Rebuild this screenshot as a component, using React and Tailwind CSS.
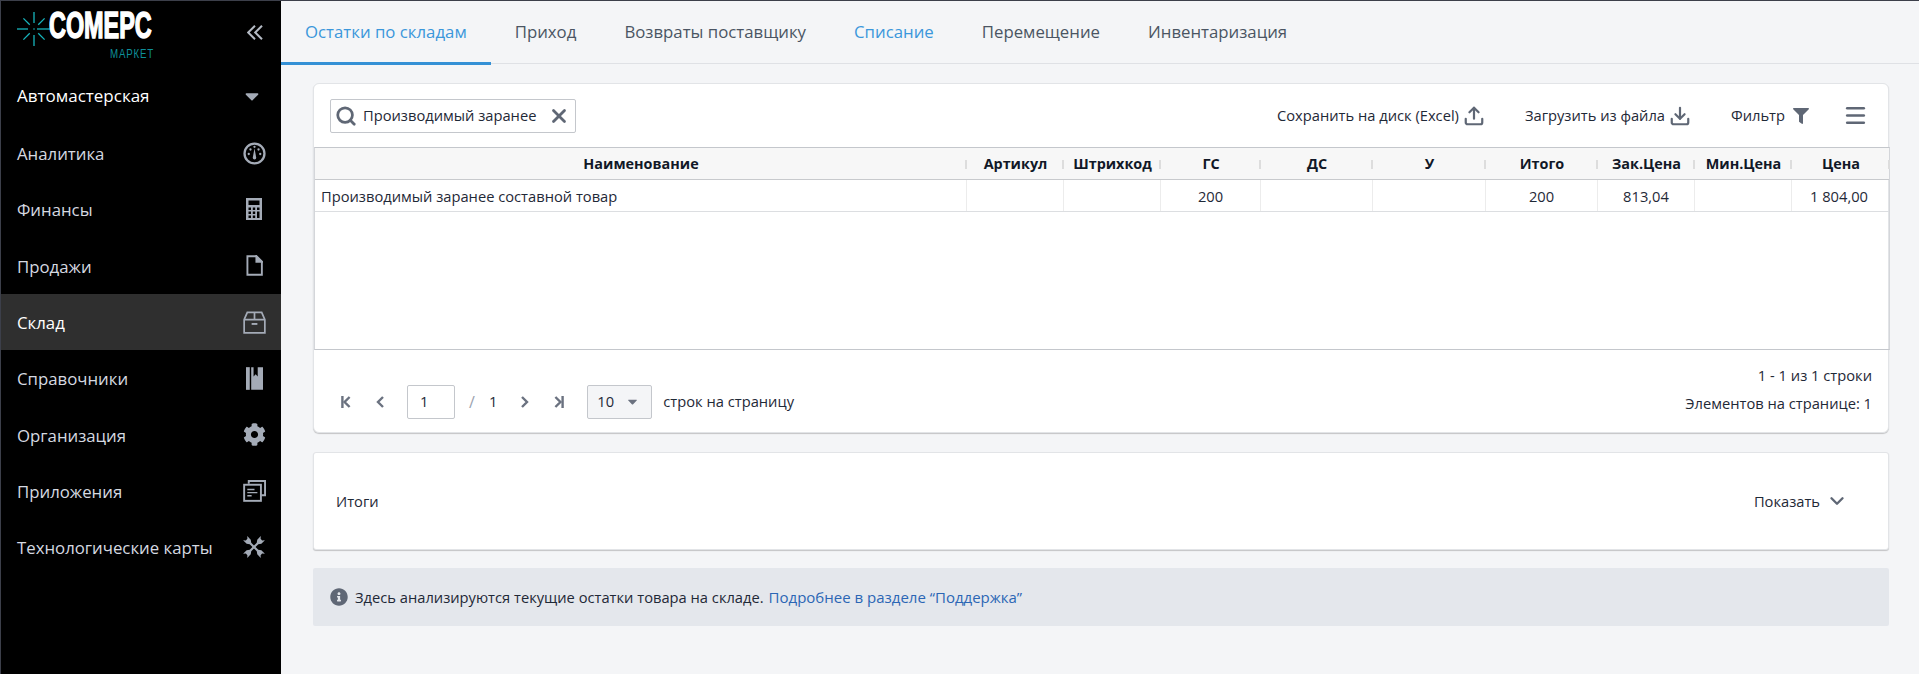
import React from "react";
import { Upload, Download, Menu, ChevronDown, Search, X } from "lucide-react";
import { FaCog, FaFilter, FaInfoCircle, FaCaretDown } from "react-icons/fa";

function GaugeIcon() {
  return (
    <svg viewBox="0 0 24 24" className="w-[23px] h-[23px]" fill="none" stroke="currentColor">
      <circle cx="12" cy="12" r="10.4" strokeWidth="2.4" />
      <path d="M12 6.5 L13.8 16.5 A1.8 1.8 0 0 1 10.2 16.5 Z" fill="currentColor" stroke="none" />
      <circle cx="6" cy="12.5" r="1.2" fill="currentColor" stroke="none" />
      <circle cx="7.8" cy="7.8" r="1.2" fill="currentColor" stroke="none" />
      <circle cx="12" cy="5" r="1.2" fill="currentColor" stroke="none" />
      <circle cx="16.2" cy="7.8" r="1.2" fill="currentColor" stroke="none" />
      <circle cx="18" cy="12.5" r="1.2" fill="currentColor" stroke="none" />
    </svg>
  );
}

function CalcIcon() {
  return (
    <svg viewBox="0 0 16 22" className="w-[16px] h-[22px]" fill="currentColor">
      <path
        fillRule="evenodd"
        d="M0 0 H16 V22 H0 Z M2.5 2.5 V7 H13.5 V2.5 Z M2.5 9.5 V12 H5 V9.5 Z M6.8 9.5 V12 H9.2 V9.5 Z M11 9.5 V12 H13.5 V9.5 Z M2.5 13.5 V16 H5 V13.5 Z M6.8 13.5 V16 H9.2 V13.5 Z M11 13.5 V20 H13.5 V13.5 Z M2.5 17.5 V20 H5 V17.5 Z M6.8 17.5 V20 H9.2 V17.5 Z"
      />
    </svg>
  );
}

function FileIcon() {
  return (
    <svg viewBox="0 0 18 22" className="w-[17px] h-[21px]" fill="none" stroke="currentColor" strokeWidth="2">
      <path d="M1.5 1.2 H11 L16.8 7 V20.8 H1.5 Z" />
      <path d="M11 1.2 V7 H16.8 Z" fill="currentColor" />
    </svg>
  );
}

function BoxIcon() {
  return (
    <svg viewBox="0 0 24 24" className="w-[23px] h-[23px]" fill="none" stroke="currentColor" strokeWidth="1.8">
      <path d="M1.2 9 L4.5 1.5 H19.5 L22.8 9 V22.8 H1.2 Z" />
      <path d="M1.2 9 H22.8 M12 1.5 V9" />
      <path d="M9 13.5 H15" strokeWidth="2" />
    </svg>
  );
}

function BooksIcon() {
  return (
    <svg viewBox="0 0 18 24" className="w-[17px] h-[23px]" fill="currentColor">
      <rect x="0" y="0" width="4" height="24" />
      <path d="M5.5 0 H8 V10 L10.2 7.5 L12.4 10 V0 H18 V24 H5.5 Z" />
    </svg>
  );
}

function WindowsIcon() {
  return (
    <svg viewBox="0 0 24 24" className="w-[23px] h-[23px]" fill="none" stroke="currentColor" strokeWidth="2">
      <path d="M6 5 V2 H23 V17 H19" />
      <rect x="1.2" y="6" width="17.5" height="16.8" />
      <path d="M4.5 11 H12 M4.5 14.2 H15 M4.5 17.4 H9" strokeWidth="1.5" />
    </svg>
  );
}

function WrenchesIcon() {
  const wrench = "M8.5 -3 V3 L10.7 6 V18 L8.5 21 V27 L10.7 24.5 H13.3 L15.5 27 V21 L13.3 18 V6 L15.5 3 V-3 L13.3 -0.5 H10.7 Z";
  return (
    <svg viewBox="0 0 24 24" className="w-[20px] h-[20px] overflow-visible" fill="currentColor">
      <path d={wrench} transform="rotate(45 12 12)" />
      <path d={wrench} transform="rotate(-45 12 12)" />
    </svg>
  );
}

function SunburstIcon() {
  const rays = [0, 45, 135, 180, 225, 270, 315];
  return (
    <svg viewBox="0 0 34 34" className="w-[34px] h-[34px] shrink-0" stroke="#17b5bd" strokeWidth="1.3">
      {rays.map((r) => (
        <line key={r} x1="17" y1={r % 90 === 0 ? 0 : 2} x2="17" y2="11" transform={`rotate(${r} 17 17)`} />
      ))}
      <line x1="20" y1="17" x2="34" y2="17" />
      <circle cx="17" cy="17" r="0.8" fill="#17b5bd" stroke="none" />
    </svg>
  );
}

function FirstIcon({ flip }) {
  return (
    <svg viewBox="0 0 10 12" className={`w-[10px] h-[12px] ${flip ? "-scale-x-100" : ""}`} fill="none" stroke="#6b7280" strokeWidth="2.4">
      <path d="M1.4 0 V12" />
      <path d="M8.6 1 L3.6 6 L8.6 11" />
    </svg>
  );
}

const menu = [
  { title: "Аналитика", icon: <GaugeIcon /> },
  { title: "Финансы", icon: <CalcIcon /> },
  { title: "Продажи", icon: <FileIcon /> },
  { title: "Склад", icon: <BoxIcon />, active: true },
  { title: "Справочники", icon: <BooksIcon /> },
  { title: "Организация", icon: <FaCog size={23} /> },
  { title: "Приложения", icon: <WindowsIcon /> },
  { title: "Технологические карты", icon: <WrenchesIcon /> },
];

const tabs = [
  { title: "Остатки по складам", active: true },
  { title: "Приход" },
  { title: "Возвраты поставщику" },
  { title: "Списание", blue: true },
  { title: "Перемещение" },
  { title: "Инвентаризация" },
];

const columns = ["Наименование", "Артикул", "Штрихкод", "ГС", "ДС", "У", "Итого", "Зак.Цена", "Мин.Цена", "Цена"];
const row = ["Производимый заранее составной товар", "", "", "200", "", "", "200", "813,04", "", "1 804,00"];
const gridCols = "grid grid-cols-[652px_97px_97px_100px_112px_113px_112px_97px_97px_98px]";

function Sidebar() {
  return (
    <aside className="w-[280px] shrink-0 bg-black flex flex-col">
      <div className="h-[65px] flex items-start justify-between pl-[16px] pr-[18px] pt-[11px]">
        <div className="relative w-[140px]">
          <SunburstIcon />
          <span className="absolute left-[32px] top-[-8px] font-['Liberation_Sans'] font-bold text-[36px] leading-[44px] text-white origin-left scale-x-[0.65] whitespace-nowrap [-webkit-text-stroke:1.5px_white]">
            COMEPC
          </span>
          <span className="absolute left-[93px] top-[35px] font-['Liberation_Sans'] text-[12px] leading-[14px] tracking-[1px] text-[#0e8f99] origin-left scale-x-[0.81] whitespace-nowrap">
            МАРКЕТ
          </span>
        </div>
        <svg viewBox="0 0 16 15" className="w-[16px] h-[15px] mt-[13px] text-[#b4bac4]" fill="none" stroke="currentColor" strokeWidth="2">
          <path d="M8 0.7 L1.2 7.5 L8 14.3 M15 0.7 L8.2 7.5 L15 14.3" />
        </svg>
      </div>
      <div className="h-[59px] flex items-center justify-between pl-[16px] pr-[18px] text-white text-[17px]">
        <span className="pt-[1px]">Автомастерская</span>
        <FaCaretDown size={22} className="text-[#a4abb7]" />
      </div>
      {menu.map((item) => (
        <div
          key={item.title}
          className={`h-[56.3px] flex items-center justify-between pl-[16px] ${item.active ? "bg-[#2f2f2f] text-white" : "text-[#d5d9e0]"}`}
        >
          <span className="pt-[1px]">{item.title}</span>
          <span className="w-[24px] mr-[15px] flex justify-center text-[#a4abb7]">{item.icon}</span>
        </div>
      ))}
    </aside>
  );
}

function Toolbar() {
  return (
    <div className="h-[63px] flex items-center justify-between pl-[16px] pr-[20px] text-[#1f2937]">
      <div className="w-[246px] h-[34px] flex items-center border border-[#c4c7cc] rounded-[2px] pl-[4px]">
        <Search size={22} strokeWidth={3} className="text-[#5f6775] shrink-0" />
        <span className="ml-[6px] whitespace-nowrap">Производимый заранее</span>
        <X size={22} strokeWidth={3} className="ml-auto mr-[5px] text-[#5f6775] shrink-0" />
      </div>
      <div className="flex items-center">
        <span>Сохранить на диск (Excel)</span>
        <Upload size={22} strokeWidth={2.4} className="ml-[4px] text-[#5f6775]" />
        <span className="ml-[40px]">Загрузить из файла</span>
        <Download size={22} strokeWidth={2.4} className="ml-[4px] text-[#5f6775]" />
        <span className="ml-[40px]">Фильтр</span>
        <FaFilter size={16} className="ml-[8px] text-[#5f6775]" />
        <Menu size={25} strokeWidth={2.4} className="ml-[34px] text-[#5f6775]" />
      </div>
    </div>
  );
}

function StockTable() {
  return (
    <div className="w-[1576px] h-[203px] border-y border-[#c4c7cc] border-x border-x-[#d4d6da]">
      <div className={`${gridCols} h-[32px] bg-[#f7f7f7] border-b border-[#c8cacd] font-bold text-[14.4px] text-[#111827]`}>
        {columns.map((col) => (
          <div key={col} className="relative flex items-center justify-center">
            {col}
            <span className="absolute right-0 top-[12px] w-[2px] h-[9px] bg-[#dddddd]" />
          </div>
        ))}
      </div>
      <div className={`${gridCols} h-[32px] border-b border-[#dcdee1] text-[#1f2937]`}>
        {row.map((val, i) => (
          <div
            key={i}
            className={`flex items-center pt-[1px] border-r border-[#ececec] last:border-r-0 ${i === 0 ? "pl-[6px]" : i === 9 ? "justify-end pr-[22px]" : "justify-center"}`}
          >
            {val}
          </div>
        ))}
      </div>
    </div>
  );
}

function Pagination() {
  return (
    <div className="flex-1 flex justify-between pl-[27px] pr-[16px] text-[#1f2937]">
      <div className="flex items-center pt-[21px]">
        <FirstIcon />
        <svg viewBox="0 0 8 12" className="w-[8px] h-[12px] ml-[25px]" fill="none" stroke="#6b7280" strokeWidth="2.4">
          <path d="M7 1 L2 6 L7 11" />
        </svg>
        <div className="ml-[23px] w-[48px] h-[34px] flex items-center pl-[12px] border border-[#c4c7cc] rounded-[2px]">1</div>
        <span className="ml-[14px] text-[#9ca3af] text-[16px] font-medium">/</span>
        <span className="ml-[14px]">1</span>
        <svg viewBox="0 0 8 12" className="w-[8px] h-[12px] ml-[24px]" fill="none" stroke="#6b7280" strokeWidth="2.4">
          <path d="M1 1 L6 6 L1 11" />
        </svg>
        <span className="ml-[25px]"><FirstIcon flip /></span>
        <div className="ml-[23px] w-[65px] h-[34px] flex items-center justify-between pl-[9px] pr-[11px] bg-[#f4f5f7] border border-[#c4c7cc] rounded-[2px]">
          <span>10</span>
          <FaCaretDown size={15} className="text-[#6b7280]" />
        </div>
        <span className="ml-[11px]">строк на страницу</span>
      </div>
      <div className="flex flex-col items-end gap-[9px] pt-[16px] leading-[19px]">
        <span>1 - 1 из 1 строки</span>
        <span>Элементов на странице: 1</span>
      </div>
    </div>
  );
}

export default function App() {
  return (
    <div className="h-screen w-full flex overflow-hidden bg-[#f4f5f7] border-t border-l border-[#3c3f4a] font-['Open_Sans',sans-serif] text-[16.8px]">
      <Sidebar />
      <main className="flex-1 min-w-0 flex flex-col">
        <nav className="h-[62px] flex border-b border-[#dfe1e5] box-content">
          {tabs.map((tab) => (
            <div
              key={tab.title}
              className={`relative flex items-center px-[24px] ${tab.active || tab.blue ? "text-[#3b97db]" : "text-[#4b5563]"}`}
            >
              {tab.title}
              {tab.active && <span className="absolute left-0 right-0 top-[61px] h-[3px] bg-[#3490d5]" />}
            </div>
          ))}
        </nav>
        <div className="flex flex-col pl-[32px] pr-[30px] pt-[19px] text-[14.7px]">
          <section className="h-[350px] flex flex-col bg-white border border-[#e2e4e7] rounded-[6px] shadow-[0_1px_1px_rgba(0,0,0,0.2)]">
            <Toolbar />
            <StockTable />
            <Pagination />
          </section>
          <section className="mt-[19px] h-[98px] flex items-center justify-between pl-[22px] pr-[40px] bg-white border border-[#e2e4e7] rounded-[3px] shadow-[0_1px_1px_rgba(0,0,0,0.2)] text-[#1f2937]">
            <span className="pt-[1px]">Итоги</span>
            <span className="flex items-center pt-[1px]">
              Показать
              <ChevronDown size={22} strokeWidth={2.6} className="ml-[6px] text-[#5f6775]" />
            </span>
          </section>
          <div className="mt-[18px] h-[58px] flex items-center pl-[17px] bg-[#e4e7ec] rounded-[2px] text-[#1f2937]">
            <FaInfoCircle size={18} className="text-[#5f6775] mr-[7px]" />
            <span>Здесь анализируются текущие остатки товара на складе.</span>
            <a className="ml-[5px] text-[15px] text-[#2b66b5]">Подробнее в разделе “Поддержка”</a>
          </div>
        </div>
      </main>
    </div>
  );
}
